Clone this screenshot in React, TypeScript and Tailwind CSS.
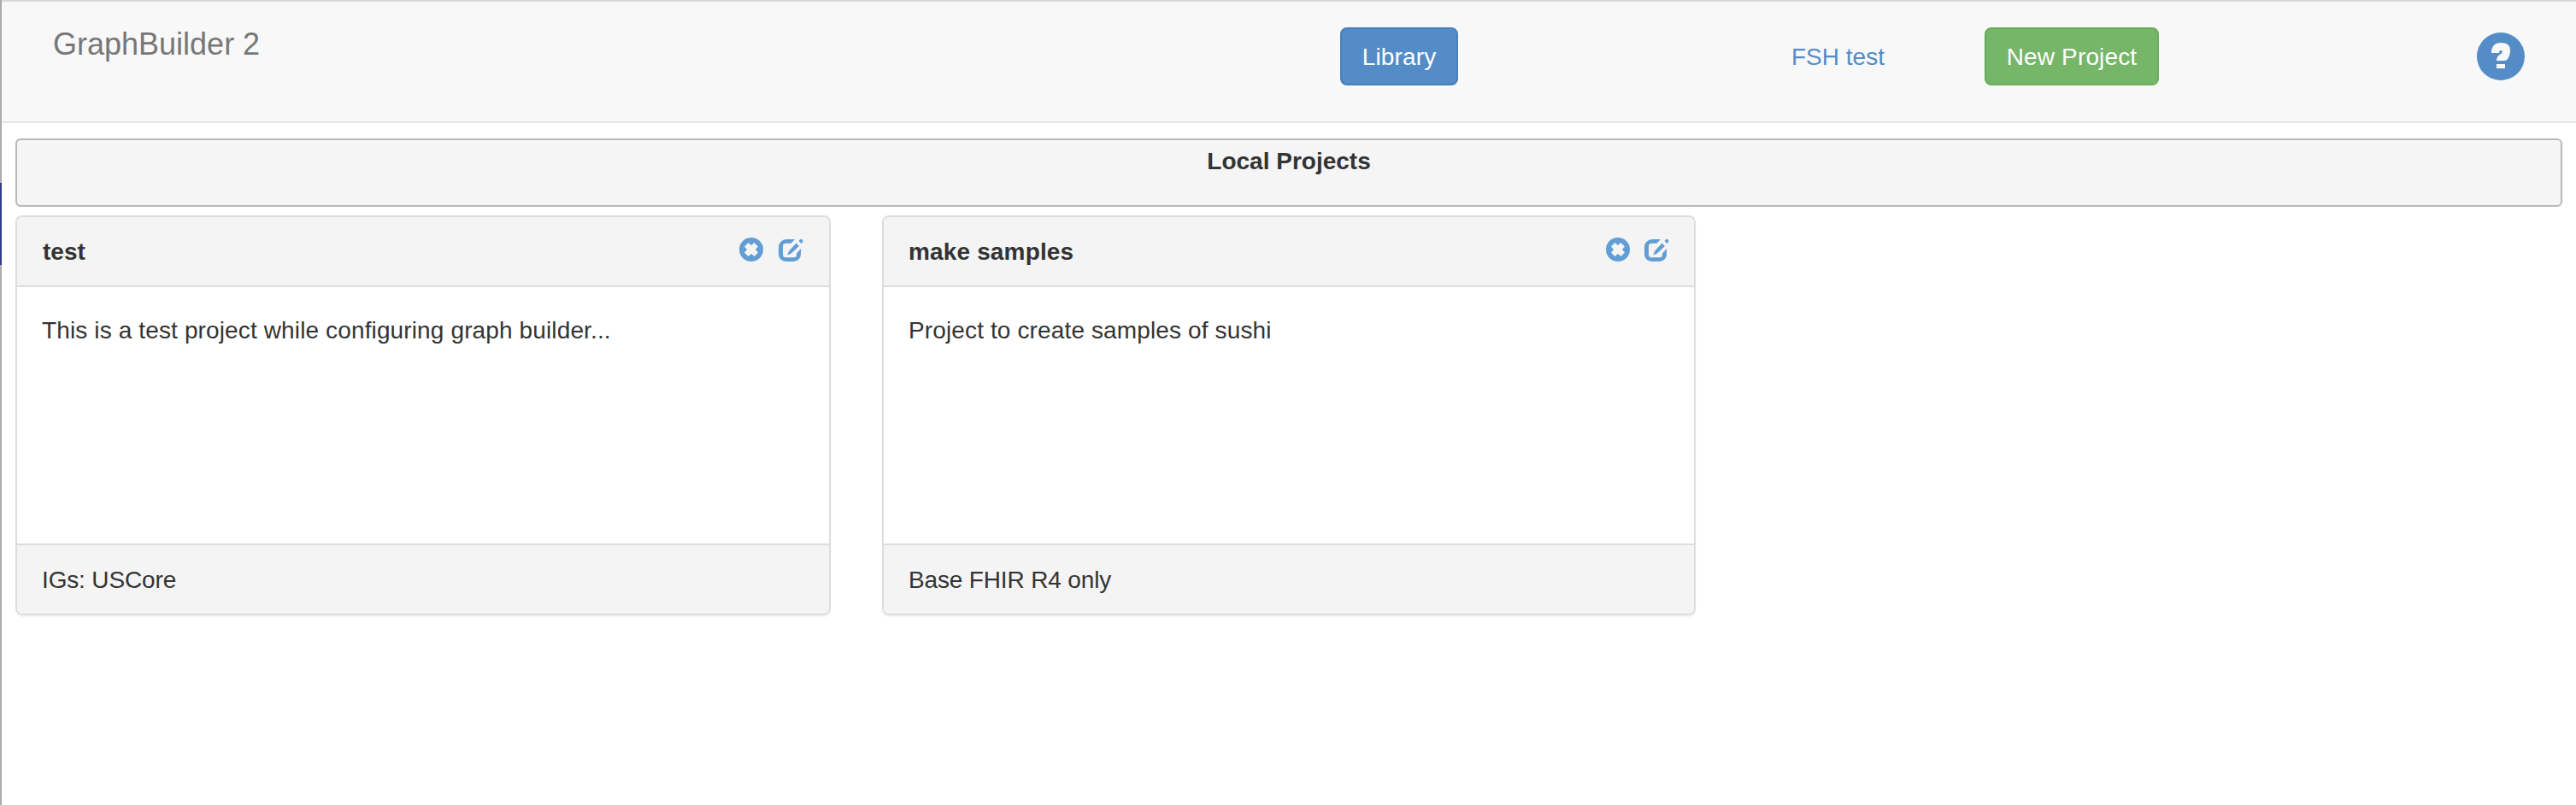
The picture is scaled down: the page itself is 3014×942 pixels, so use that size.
const projects = [
  {
    name: 'test',
    description: 'This is a test project while configuring graph builder...',
    guide: 'IGs: USCore',
    size: 'w-[954px]',
    actions: 'gap-[18px] mr-px',
    heading: '',
  },
  {
    name: 'make samples',
    description: 'Project to create samples of sushi',
    guide: 'Base FHIR R4 only',
    size: 'w-[952px]',
    actions: 'gap-[17px]',
    heading: 'tracking-[0.15px] -ml-px',
  },
];

function QuestionIcon() {
  return (
    <svg viewBox="0 0 56 56" className="h-14 w-14">
      <circle cx="28" cy="28" r="28" fill="#538cc6" />
      <path d="M17 24C17 16.500 20.500 12 28.500 12C35.500 12 39 15.500 39 20.500C39 25 38 28 36 31C35.300 32 33.500 33 32 33H23C23 26 29.700 25.500 29.700 22.500C29.700 21.500 29 21 28 21C27 21 26.200 21.500 26.300 22.500C26.300 23.500 25.500 24 24.500 24ZM23 37H33V42H23Z" fill="#f8f8f8" />
    </svg>
  );
}

function RemoveIcon() {
  return (
    <svg viewBox="0 0 28 28" className="h-7 w-7">
      <circle cx="14" cy="14" r="14" fill="#619ed5" />
      <path d="M10.500 6L14 9L17.500 6L22 10.500L19 14L22 17.500L17.500 22L14 19L10.500 22L6 17.500L9 14L6 10.500Z" fill="#f4f4f4" />
    </svg>
  );
}

function EditIcon() {
  return (
    <svg viewBox="0 0 29 28" className="h-7 w-[29px]" fill="#619ed5">
      <path d="M9 2H19L14.500 6.700H8.500A3.500 3.500 0 0 0 5 10.200V20A3.300 3.300 0 0 0 8.300 23.300H18A3 3 0 0 0 21 20.300V18.500L26 13V19.500A8.500 8.500 0 0 1 17.500 28H8.500A8.500 8.500 0 0 1 0 19.500V11A9 9 0 0 1 9 2Z" />
      <path d="M20.500 6.500L24 10L14.500 18.800L10.300 20.500L12 16Z" />
      <path d="M23.500 4L25.500 2Q26.500 1.500 27.800 2.500Q29 3.800 28.300 5L26.500 7Z" />
    </svg>
  );
}

export default function App() {
  return (
    <div className="flex h-[942px] w-[3014px] overflow-hidden bg-white font-['Liberation_Sans',Arial,sans-serif] text-[28px] leading-10 text-[#333]">
      <div className="flex w-[2px] shrink-0 flex-col bg-[#acacac]">
        <div className="mt-[214px] h-24 bg-[#2c3e8c]" />
      </div>
      <div className="flex grow flex-col">
        <nav className="flex h-36 shrink-0 items-start border-t-2 border-b-2 border-t-[#d5dade] border-b-[#e7e7e7] bg-[#f8f8f8]">
          <div className="ml-[60px] mt-[30px] w-[1506px] text-[36px] leading-10 text-[#777]">GraphBuilder 2</div>
          <button className="mt-[30px] h-[68px] w-[138px] rounded-lg border-2 border-[#4a7fb9] bg-[#538cc6] pt-0.5 tracking-[0.15px] text-white">Library</button>
          <a className="ml-[390px] mt-[45px] w-[226px] text-[#538cc6]">FSH test</a>
          <button className="mt-[30px] h-[68px] w-[204px] rounded-lg border-2 border-[#69ac58] bg-[#75b668] pt-0.5 tracking-[0.15px] text-white">New Project</button>
          <div className="ml-[372px] mt-9"><QuestionIcon /></div>
        </nav>
        <main className="px-4 pt-[18px]">
          <h1 className="h-20 w-[2980px] rounded-md border-2 border-[#b8b8b4] bg-[#f5f5f5] pt-[5px] text-center font-bold">Local Projects</h1>
          <div className="mt-[10px] flex gap-[60px]">
            {projects.map((p) => (
              <section key={p.name} className={`${p.size} flex h-[468px] flex-col overflow-hidden rounded-lg border-2 border-[#ddd] shadow-[0_2px_2px_rgba(0,0,0,0.05)]`}>
                <header className="flex h-[82px] shrink-0 items-start border-b-2 border-[#ddd] bg-[#f4f4f4] pl-[30px] pr-[29px] pt-5">
                  <h2 className={`mt-px grow font-bold ${p.heading}`}>{p.name}</h2>
                  <div className={`mt-1 flex ${p.actions}`}><RemoveIcon /><EditIcon /></div>
                </header>
                <p className="grow px-[29px] pt-[31px] tracking-[0.13px]">{p.description}</p>
                <footer className="h-[82px] shrink-0 border-t-2 border-[#ddd] bg-[#f4f4f4] px-[29px] pt-[21px] tracking-[-0.15px]">{p.guide}</footer>
              </section>
            ))}
          </div>
        </main>
      </div>
    </div>
  );
}
